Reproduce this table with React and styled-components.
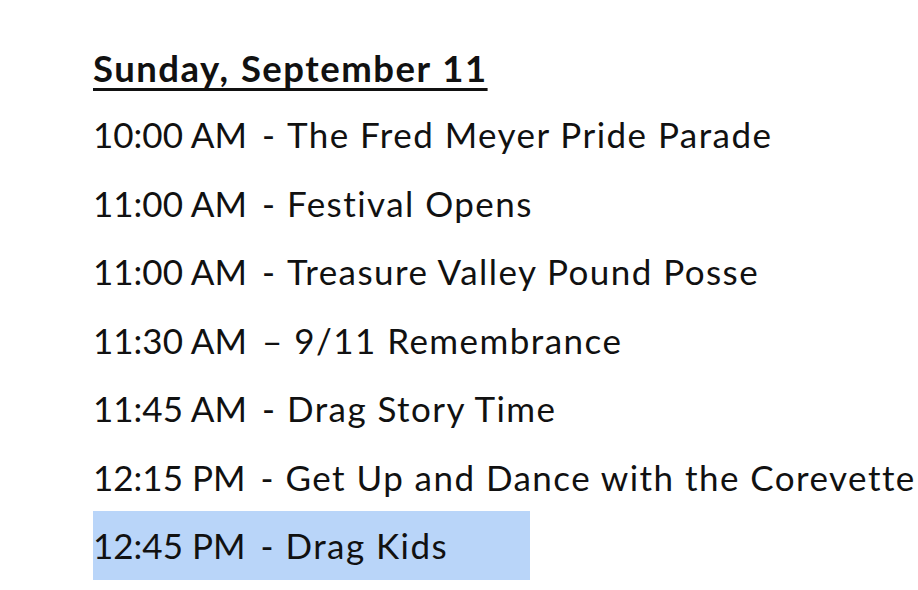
import styled, { createGlobalStyle } from 'styled-components';

const Global = createGlobalStyle`
  body {
    margin: 0;
    background: #fff;
  }
`;

const Page = styled.div`
  width: 918px;
  height: 590px;
  overflow: hidden;
  padding: 38px 0 0 93px;
  box-sizing: border-box;
  font-family: Lato, "Open Sans", sans-serif;
  color: #111;
`;

const Heading = styled.h2`
  margin: 0;
  font-size: 36.5px;
  font-weight: 700;
  line-height: 60px;
  letter-spacing: 1.5px;
  word-spacing: 1px;
  text-decoration: underline;
  text-decoration-thickness: 3px;
  text-underline-offset: 6px;
  height: 62px;
`;

const Line = styled.div`
  font-size: 35px;
  line-height: 68.5px;
  white-space: nowrap;
  width: fit-content;
  padding-right: ${p => p.$pad || 0}px;
  background: ${p => (p.$selected ? '#b9d5f9' : 'transparent')};
`;

const Time = styled.span`
  letter-spacing: 0;
`;

const Sep = styled.span`
  display: inline-block;
  padding: 0 12px 0 15px;
`;

const Title = styled.span`
  letter-spacing: 1.45px;
`;

const items = [
  ['10:00 AM', '-', 'The Fred Meyer Pride Parade'],
  ['11:00 AM', '-', 'Festival Opens'],
  ['11:00 AM', '-', 'Treasure Valley Pound Posse'],
  ['11:30 AM', '\u2013', '9/11 Remembrance'],
  ['11:45 AM', '-', 'Drag Story Time'],
  ['12:15 PM', '-', 'Get Up and Dance with the Corevette'],
  ['12:45 PM', '-', 'Drag Kids'],
];

const App = () => {
  return (
    <>
      <Global />
      <Page>
        <Heading>Sunday, September 11</Heading>
        {items.map(([time, dash, title], i) => {
          const last = i === items.length - 1;
          return (
            <Line key={i} $selected={last} $pad={last ? 82 : 0}>
              <Time>{time}</Time>
              <Sep>{dash}</Sep>
              <Title>{title}</Title>
            </Line>
          );
        })}
      </Page>
    </>
  );
};

export default App;
